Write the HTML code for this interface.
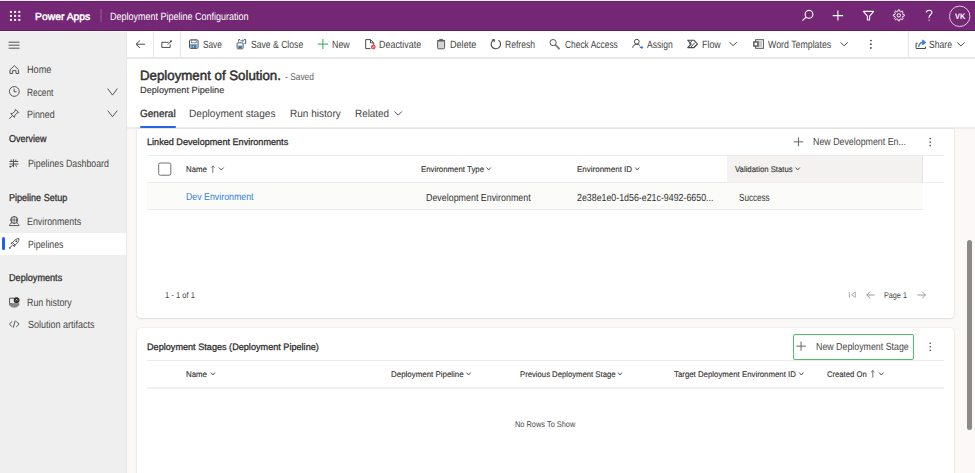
<!DOCTYPE html>
<html><head><meta charset="utf-8"><style>
html,body{margin:0;padding:0;width:975px;height:473px;overflow:hidden;position:relative;font-family:"Liberation Sans",sans-serif;}
.t{position:absolute;white-space:nowrap;transform-origin:0 0;text-rendering:geometricPrecision}
svg{overflow:visible}
</style></head><body>
<div style="position:absolute;left:0px;top:0px;width:975px;height:473px;background:#faf9f8"></div>
<div style="position:absolute;left:0px;top:0px;width:975px;height:1px;background:#f3f4f1"></div>
<div style="position:absolute;left:0px;top:1px;width:975px;height:30px;background:#742774"></div>
<div style="position:absolute;left:0px;top:30px;width:975px;height:1px;background:#651a65"></div>
<div style="position:absolute;left:0px;top:1px;width:975px;height:1px;background:#6c1f6c"></div>
<div style="position:absolute;left:0px;top:31px;width:127px;height:442px;background:#efefef"></div>
<div style="position:absolute;left:0px;top:31px;width:126px;height:1px;background:#fafafa"></div>
<div style="position:absolute;left:126px;top:31px;width:1px;height:442px;background:#e6e6e6"></div>
<div style="position:absolute;left:127px;top:31px;width:848px;height:27px;background:#ffffff"></div>
<div style="position:absolute;left:127px;top:57px;width:848px;height:2px;background:#e9e8e7"></div>
<div style="position:absolute;left:127px;top:59px;width:848px;height:68px;background:#ffffff"></div>
<div style="position:absolute;left:127px;top:127px;width:848px;height:2px;background:#eeedec"></div>
<div style="position:absolute;left:0px;top:233px;width:126px;height:22px;background:#ffffff"></div>
<div style="position:absolute;left:2px;top:237px;width:3px;height:13px;background:#1f5ff0;border-radius:2px"></div>
<div style="position:absolute;left:137px;top:129px;width:817px;height:189px;background:#fff;border-radius:0 0 4px 4px;box-shadow:0 0 2px rgba(0,0,0,0.14),0 1px 2px rgba(0,0,0,0.08)"></div>
<div style="position:absolute;left:137px;top:328px;width:817px;height:160px;background:#fff;border-radius:4px;box-shadow:0 0 2px rgba(0,0,0,0.14),0 1px 2px rgba(0,0,0,0.08)"></div>
<div style="position:absolute;left:967px;top:240px;width:5px;height:190px;background:#8a8a8a;border-radius:3px"></div>
<div style="position:absolute;left:140px;top:126px;width:36px;height:2px;background:#2266e3;border-radius:1px"></div>
<div style="position:absolute;left:147px;top:155px;width:797px;height:1px;background:#edebe9"></div>
<div style="position:absolute;left:727px;top:156px;width:196px;height:27px;background:#f3f2f1"></div>
<div style="position:absolute;left:922px;top:156px;width:1px;height:26px;background:#e6e4e2"></div>
<div style="position:absolute;left:147px;top:182px;width:797px;height:1px;background:#edebe9"></div>
<div style="position:absolute;left:147px;top:183px;width:776px;height:26px;background:#fbfbfa"></div>
<div style="position:absolute;left:147px;top:209px;width:776px;height:1px;background:#edebe9"></div>
<div style="position:absolute;left:147px;top:360px;width:797px;height:1px;background:#edebe9"></div>
<div style="position:absolute;left:147px;top:387px;width:797px;height:2px;background:#f0efee"></div>
<div style="position:absolute;left:793px;top:334px;width:121px;height:26px;border:1.6px solid #4fbd6a;border-radius:2px;box-sizing:border-box"></div>
<div class="t" id="t0" style="left:35.20px;top:13.00px;font-size:10.3px;line-height:10.3px;transform:scaleX(1.0064);color:#ffffff;-webkit-text-stroke-width:0.45px;">Power Apps</div>
<div class="t" id="t1" style="left:110.47px;top:12.00px;font-size:10.5px;line-height:10.5px;transform:scaleX(0.8566);color:#ffffff;">Deployment Pipeline Configuration</div>
<div class="t" id="t2" style="left:202.59px;top:40.00px;font-size:10.5px;line-height:10.5px;transform:scaleX(0.7879);color:#474645;">Save</div>
<div class="t" id="t3" style="left:250.72px;top:40.00px;font-size:10.5px;line-height:10.5px;transform:scaleX(0.8201);color:#474645;">Save &amp; Close</div>
<div class="t" id="t4" style="left:332.11px;top:40.00px;font-size:10.5px;line-height:10.5px;transform:scaleX(0.8444);color:#474645;">New</div>
<div class="t" id="t5" style="left:378.87px;top:40.00px;font-size:10.5px;line-height:10.5px;transform:scaleX(0.8507);color:#474645;">Deactivate</div>
<div class="t" id="t6" style="left:450.37px;top:40.00px;font-size:10.5px;line-height:10.5px;transform:scaleX(0.8651);color:#474645;">Delete</div>
<div class="t" id="t7" style="left:505.20px;top:40.00px;font-size:10.5px;line-height:10.5px;transform:scaleX(0.8169);color:#474645;">Refresh</div>
<div class="t" id="t8" style="left:564.63px;top:40.00px;font-size:10.5px;line-height:10.5px;transform:scaleX(0.8006);color:#474645;">Check Access</div>
<div class="t" id="t9" style="left:646.67px;top:40.00px;font-size:10.5px;line-height:10.5px;transform:scaleX(0.8159);color:#474645;">Assign</div>
<div class="t" id="t10" style="left:702.19px;top:40.00px;font-size:10.5px;line-height:10.5px;transform:scaleX(0.8432);color:#474645;">Flow</div>
<div class="t" id="t11" style="left:768.33px;top:40.00px;font-size:10.5px;line-height:10.5px;transform:scaleX(0.8373);color:#474645;">Word Templates</div>
<div class="t" id="t12" style="left:929.13px;top:40.00px;font-size:10.5px;line-height:10.5px;transform:scaleX(0.8194);color:#474645;">Share</div>
<div class="t" id="t13" style="left:27.46px;top:65.00px;font-size:10.5px;line-height:10.5px;transform:scaleX(0.8700);color:#474645;">Home</div>
<div class="t" id="t14" style="left:27.42px;top:88.00px;font-size:10.5px;line-height:10.5px;transform:scaleX(0.7925);color:#474645;">Recent</div>
<div class="t" id="t15" style="left:27.38px;top:110.00px;font-size:10.5px;line-height:10.5px;transform:scaleX(0.8466);color:#474645;">Pinned</div>
<div class="t" id="t16" style="left:27.86px;top:159.00px;font-size:10.5px;line-height:10.5px;transform:scaleX(0.8347);color:#474645;">Pipelines Dashboard</div>
<div class="t" id="t17" style="left:27.46px;top:217.00px;font-size:10.5px;line-height:10.5px;transform:scaleX(0.8426);color:#474645;">Environments</div>
<div class="t" id="t18" style="left:27.86px;top:240.00px;font-size:10.5px;line-height:10.5px;transform:scaleX(0.8309);color:#474645;">Pipelines</div>
<div class="t" id="t19" style="left:27.47px;top:298.00px;font-size:10.5px;line-height:10.5px;transform:scaleX(0.8422);color:#474645;">Run history</div>
<div class="t" id="t20" style="left:27.56px;top:320.00px;font-size:10.5px;line-height:10.5px;transform:scaleX(0.8555);color:#474645;">Solution artifacts</div>
<div class="t" id="t21" style="left:9.25px;top:135.00px;font-size:10.0px;line-height:10.0px;transform:scaleX(0.8966);color:#323130;-webkit-text-stroke-width:0.30px;">Overview</div>
<div class="t" id="t22" style="left:8.59px;top:194.00px;font-size:10.0px;line-height:10.0px;transform:scaleX(0.9027);color:#323130;-webkit-text-stroke-width:0.30px;">Pipeline Setup</div>
<div class="t" id="t23" style="left:8.59px;top:274.00px;font-size:10.0px;line-height:10.0px;transform:scaleX(0.9116);color:#323130;-webkit-text-stroke-width:0.30px;">Deployments</div>
<div class="t" id="t24" style="left:140.01px;top:69.00px;font-size:13.5px;line-height:13.5px;transform:scaleX(0.9832);color:#323130;-webkit-text-stroke-width:0.50px;">Deployment of Solution.</div>
<div class="t" id="t25" style="left:284.66px;top:73.00px;font-size:9.9px;line-height:9.9px;transform:scaleX(0.8499);color:#605e5c;">- Saved</div>
<div class="t" id="t26" style="left:139.52px;top:86.00px;font-size:9.0px;line-height:9.0px;transform:scaleX(1.0206);color:#323130;-webkit-text-stroke-width:0.12px;">Deployment Pipeline</div>
<div class="t" id="t27" style="left:140.45px;top:109.00px;font-size:10.5px;line-height:10.5px;transform:scaleX(0.9532);color:#323130;-webkit-text-stroke-width:0.30px;">General</div>
<div class="t" id="t28" style="left:188.61px;top:109.00px;font-size:10.5px;line-height:10.5px;transform:scaleX(0.9616);color:#474645;">Deployment stages</div>
<div class="t" id="t29" style="left:289.64px;top:109.00px;font-size:10.5px;line-height:10.5px;transform:scaleX(0.9557);color:#474645;">Run history</div>
<div class="t" id="t30" style="left:355.07px;top:109.00px;font-size:10.5px;line-height:10.5px;transform:scaleX(0.9425);color:#474645;">Related</div>
<div class="t" id="t31" style="left:146.91px;top:138.00px;font-size:9.3px;line-height:9.3px;transform:scaleX(0.9792);color:#323130;-webkit-text-stroke-width:0.30px;">Linked Development Environments</div>
<div class="t" id="t32" style="left:812.58px;top:138.00px;font-size:10.3px;line-height:10.3px;transform:scaleX(0.8584);color:#484644;">New Development En...</div>
<div class="t" id="t33" style="left:186.48px;top:166.00px;font-size:8.2px;line-height:8.2px;transform:scaleX(0.9556);color:#323130;-webkit-text-stroke-width:0.12px;">Name</div>
<div class="t" id="t34" style="left:421.48px;top:166.00px;font-size:8.2px;line-height:8.2px;transform:scaleX(0.9575);color:#323130;-webkit-text-stroke-width:0.12px;">Environment Type</div>
<div class="t" id="t35" style="left:577.43px;top:166.00px;font-size:8.2px;line-height:8.2px;transform:scaleX(0.9760);color:#323130;-webkit-text-stroke-width:0.12px;">Environment ID</div>
<div class="t" id="t36" style="left:735.20px;top:166.00px;font-size:8.2px;line-height:8.2px;transform:scaleX(0.9480);color:#323130;-webkit-text-stroke-width:0.12px;">Validation Status</div>
<div class="t" id="t37" style="left:186.36px;top:193.00px;font-size:10px;line-height:10px;transform:scaleX(0.8805);color:#2f7fd8;">Dev Environment</div>
<div class="t" id="t38" style="left:426.36px;top:194.00px;font-size:10.3px;line-height:10.3px;transform:scaleX(0.8628);color:#323130;">Development Environment</div>
<div class="t" id="t39" style="left:577.29px;top:194.00px;font-size:10.3px;line-height:10.3px;transform:scaleX(0.8573);color:#323130;">2e38e1e0-1d56-e21c-9492-6650...</div>
<div class="t" id="t40" style="left:739.39px;top:194.00px;font-size:10.3px;line-height:10.3px;transform:scaleX(0.7883);color:#323130;">Success</div>
<div class="t" id="t41" style="left:165.37px;top:291.00px;font-size:8.5px;line-height:8.5px;transform:scaleX(0.8916);color:#484644;">1 - 1 of 1</div>
<div class="t" id="t42" style="left:884.36px;top:291.00px;font-size:8.5px;line-height:8.5px;transform:scaleX(0.8510);color:#484644;">Page 1</div>
<div class="t" id="t43" style="left:146.91px;top:343.00px;font-size:9.3px;line-height:9.3px;transform:scaleX(0.9808);color:#323130;-webkit-text-stroke-width:0.30px;">Deployment Stages (Deployment Pipeline)</div>
<div class="t" id="t44" style="left:815.58px;top:343.00px;font-size:10.3px;line-height:10.3px;transform:scaleX(0.8574);color:#484644;">New Deployment Stage</div>
<div class="t" id="t45" style="left:186.46px;top:371.00px;font-size:8.2px;line-height:8.2px;transform:scaleX(0.9615);color:#323130;-webkit-text-stroke-width:0.12px;">Name</div>
<div class="t" id="t46" style="left:391.34px;top:371.00px;font-size:8.2px;line-height:8.2px;transform:scaleX(0.9674);color:#323130;-webkit-text-stroke-width:0.12px;">Deployment Pipeline</div>
<div class="t" id="t47" style="left:519.71px;top:371.00px;font-size:8.2px;line-height:8.2px;transform:scaleX(0.9411);color:#323130;-webkit-text-stroke-width:0.12px;">Previous Deployment Stage</div>
<div class="t" id="t48" style="left:673.81px;top:371.00px;font-size:8.2px;line-height:8.2px;transform:scaleX(0.9567);color:#323130;-webkit-text-stroke-width:0.12px;">Target Deployment Environment ID</div>
<div class="t" id="t49" style="left:827.28px;top:371.00px;font-size:8.2px;line-height:8.2px;transform:scaleX(0.9367);color:#323130;-webkit-text-stroke-width:0.12px;">Created On</div>
<div class="t" id="t50" style="left:515.27px;top:420.00px;font-size:8.3px;line-height:8.3px;transform:scaleX(0.8919);color:#4a4a4a;">No Rows To Show</div>
<svg style="position:absolute;left:0;top:0" width="975" height="473" viewBox="0 0 975 473"><rect x="9.90" y="10.90" width="2" height="2" fill="#fff"/><rect x="9.90" y="14.90" width="2" height="2" fill="#fff"/><rect x="9.90" y="18.90" width="2" height="2" fill="#fff"/><rect x="14.10" y="10.90" width="2" height="2" fill="#fff"/><rect x="14.10" y="14.90" width="2" height="2" fill="#fff"/><rect x="14.10" y="18.90" width="2" height="2" fill="#fff"/><rect x="18.30" y="10.90" width="2" height="2" fill="#fff"/><rect x="18.30" y="14.90" width="2" height="2" fill="#fff"/><rect x="18.30" y="18.90" width="2" height="2" fill="#fff"/><rect x="100.5" y="9" width="1" height="13" fill="rgba(255,255,255,0.25)"/><circle cx="809" cy="14.3" r="3.9" stroke="#fff" stroke-width="1.1" fill="none"/><path d="M806.2 17.1 L802.4 20.6" stroke="#ffffff" stroke-width="1.2" fill="none" /><path d="M832.7 15.6 H843.1 M837.9 10.5 V20.6" stroke="#ffffff" stroke-width="1.1" fill="none" /><path d="M863.3 11.4 H873.7 L869.6 16.2 V20 H867.4 V16.2 Z" stroke="#ffffff" stroke-width="1.1" fill="none" stroke-linejoin="round"/><path d="M904.35 15.35 L904.30 16.07 L902.71 16.39 L902.55 16.88 L902.31 17.35 L903.21 18.70 L902.74 19.24 L902.20 19.71 L900.85 18.81 L900.38 19.05 L899.89 19.21 L899.57 20.80 L898.85 20.85 L898.13 20.80 L897.81 19.21 L897.32 19.05 L896.85 18.81 L895.50 19.71 L894.96 19.24 L894.49 18.70 L895.39 17.35 L895.15 16.88 L894.99 16.39 L893.40 16.07 L893.35 15.35 L893.40 14.63 L894.99 14.31 L895.15 13.82 L895.39 13.35 L894.49 12.00 L894.96 11.46 L895.50 10.99 L896.85 11.89 L897.32 11.65 L897.81 11.49 L898.13 9.90 L898.85 9.85 L899.57 9.90 L899.89 11.49 L900.38 11.65 L900.85 11.89 L902.20 10.99 L902.74 11.46 L903.21 12.00 L902.31 13.35 L902.55 13.82 L902.71 14.31 L904.30 14.63 Z" stroke="#ffffff" stroke-width="1.0" fill="none" stroke-linejoin="round"/><circle cx="898.85" cy="15.35" r="1.7" stroke="#fff" stroke-width="1" fill="none"/><path d="M926.3 12.6 C926.3 10.9 927.6 10.2 929.1 10.2 C930.7 10.2 931.9 11.1 931.9 12.6 C931.9 14.6 929.1 14.9 929.1 17.2 V18" stroke="#ffffff" stroke-width="1.1" fill="none" /><circle cx="929.1" cy="20.1" r="0.7" fill="#fff"/><circle cx="959.7" cy="16.3" r="10.2" stroke="rgba(255,255,255,0.75)" stroke-width="1" fill="none"/><path d="M145 44.2 H136 M140 40.4 L136 44.2 L140 48" stroke="#4a4a4a" stroke-width="1" fill="none" /><rect x="153" y="31" width="1" height="26" fill="#e8e6e4"/><rect x="180" y="31" width="1" height="26" fill="#e8e6e4"/><rect x="908" y="31" width="1" height="26" fill="#e8e6e4"/><path d="M168.5 42.3 H161.8 V47.4 H170.2 V44.5" stroke="#4a4a4a" stroke-width="1" fill="none" /><path d="M167.8 44.6 L171.2 41.2" stroke="#4a4a4a" stroke-width="1" fill="none" /><circle cx="171" cy="41.2" r="0.9" fill="#333"/><rect x="189.5" y="39.8" width="8.6" height="8.6" rx="1.2" fill="#fff" stroke="#555" stroke-width="1"/><rect x="190" y="43.9" width="7.6" height="4" fill="#72aee9"/><rect x="191.3" y="40.2" width="5" height="2.6" fill="#fff" stroke="#666" stroke-width="0.7"/><rect x="191.8" y="45.3" width="4" height="3.1" fill="#5d6670"/><rect x="192.8" y="45.9" width="1.1" height="1.8" fill="#cfd6dd"/><rect x="237.1" y="42.8" width="6" height="6" rx="0.9" fill="#fff" stroke="#555" stroke-width="1"/><rect x="237.6" y="45.4" width="5" height="3" fill="#72aee9"/><rect x="238.5" y="46.3" width="3.2" height="2.2" fill="#5d6670"/><path d="M238.6 41.6 V39.6 H240" stroke="#4a4a4a" stroke-width="0.9" fill="none" /><path d="M243.8 39.6 H245.7 V43.4 H244.3" stroke="#4a4a4a" stroke-width="0.9" fill="none" /><path d="M240.4 40.7 H243.6 M242.5 39.6 L243.6 40.7 L242.5 41.8" stroke="#3b7fd4" stroke-width="1.0" fill="none" /><path d="M317.7 44.1 H328 M322.85 39.1 V49.1" stroke="#51b96e" stroke-width="1.2" fill="none" /><path d="M370.5 39.6 H365.7 V48.6 H370.5 M370.5 39.6 L373.7 42.8 V44.8 M370.5 39.6 V42.8 H373.7" stroke="#4a4a4a" stroke-width="1" fill="none" stroke-linejoin="round"/><circle cx="373.3" cy="47" r="2.4" fill="#e5505a"/><path d="M372.3 48 L374.3 46" stroke="#fff" stroke-width="0.7" fill="none" /><rect x="437.6" y="41" width="7" height="7.8" rx="1" fill="#d4d4d4" stroke="#5a5a5a" stroke-width="1"/><path d="M437 40.6 H445.2 M439.6 40.4 V39.4 H442.6 V40.4" stroke="#5a5a5a" stroke-width="1" fill="none" /><path d="M494.2 39.7 A4.7 4.7 0 1 0 498.5 40.2" stroke="#4a4a4a" stroke-width="1.1" fill="none" /><path d="M491.7 40.0 L494.5 39.6 L494.1 42.2" stroke="#4a4a4a" stroke-width="1.0" fill="none" /><circle cx="553.1" cy="42.6" r="3.1" stroke="#555" stroke-width="1" fill="none"/><path d="M555.3 44.8 L559.6 49.1" stroke="#4a4a4a" stroke-width="1.6" fill="none" /><path d="M555.3 44.8 L559.6 49.1" stroke="#fff" stroke-width="0.5" fill="none" /><circle cx="636.8" cy="41.7" r="2.4" stroke="#4a4a4a" stroke-width="1" fill="none"/><path d="M632.7 47.8 C632.9 45.4 634.6 44.3 636.8 44.3 C638.3 44.3 639.3 44.8 640 45.6" stroke="#4a4a4a" stroke-width="1" fill="none" /><path d="M639.8 47.4 H642.4 M641.4 46.3 L642.5 47.4 L641.4 48.5" stroke="#2f7bd9" stroke-width="1.2" fill="none" /><path d="M687.7 40.2 H694 L697.5 44 L694 47.6 H687.7 L691.2 44 Z" stroke="#4a4a4a" stroke-width="1.1" fill="none" stroke-linejoin="round"/><path d="M690.7 47.3 L695.2 42.3 M693.8 47.3 L696.3 44.5 M689.0 44.2 L692.1 40.6" stroke="#4a4a4a" stroke-width="1" fill="none" /><path d="M729.4 42.2 L733.10 45.6 L736.8 42.2" stroke="#4a4a4a" stroke-width="1" fill="none" /><path d="M840.4 42.3 L844.15 45.8 L847.9 42.3" stroke="#4a4a4a" stroke-width="1" fill="none" /><path d="M957.2 42.4 L960.95 46 L964.7 42.4" stroke="#4a4a4a" stroke-width="1" fill="none" /><rect x="755.6" y="39.7" width="7.8" height="8.6" fill="#fff" stroke="#555" stroke-width="1"/><path d="M757.5 42 H762 M757.5 44 H762 M757.5 46 H762" stroke="#777" stroke-width="0.8" fill="none" /><rect x="753.2" y="41.3" width="5.4" height="5.4" fill="#4a4a4a"/><rect x="754.5" y="42.6" width="2.8" height="2.8" fill="#fff"/><circle cx="870.9" cy="40.5" r="0.85" fill="#333"/><circle cx="870.9" cy="44.2" r="0.85" fill="#333"/><circle cx="870.9" cy="47.9" r="0.85" fill="#333"/><path d="M917.6 43.2 H916.1 V48.5 H925.5 V46.6" stroke="#4a4a4a" stroke-width="1" fill="none" /><path d="M918.6 47 C919.2 43.5 921 42.3 923.8 42.3" stroke="#3a7fd5" stroke-width="1.4" fill="none" /><path d="M922.6 39.9 L925.9 42.4 L922.6 44.9 Z" stroke="#3a7fd5" stroke-width="0.8" fill="#3a7fd5" /><path d="M8.6 42.2 H19.5 M8.6 45.2 H19.5 M8.6 48.2 H19.5" stroke="#555" stroke-width="1" fill="none" /><path d="M10 69.8 L14.3 65.6 L18.6 69.8 V73.5 H16 V70.6 H12.6 V73.5 H10 Z" stroke="#555" stroke-width="1" fill="none" stroke-linejoin="round"/><circle cx="14.3" cy="91.45" r="4.9" stroke="#555" stroke-width="1" fill="none"/><path d="M14.1 88.6 V91.8 H16.6" stroke="#555" stroke-width="1" fill="none" /><path d="M15.5 109.3 L18.7 112.5 L16.7 113.2 L14.5 115.8 L14.6 117.4 L10.7 113.5 L12.3 113.6 L14.9 111.3 Z M12.6 115.6 L9.3 118.8" stroke="#555" stroke-width="1" fill="none" stroke-linejoin="round"/><path d="M107.7 88.6 L112.50 95.1 L117.3 88.6" stroke="#555" stroke-width="1" fill="none" /><path d="M107.7 110.6 L112.50 116.7 L117.3 110.6" stroke="#555" stroke-width="1" fill="none" /><path d="M13.5 159.2 V167 M9.5 161.5 H18.3 M9.5 164 H18.3 M11.2 159.6 V162 M15.8 159.6 V162 M11.4 166.6 L13.2 165 M15.2 165 L17 166.6" stroke="#555" stroke-width="1" fill="none" /><circle cx="10.3" cy="166.6" r="0.9" fill="#333"/><circle cx="14.2" cy="220" r="3.5" stroke="#555" stroke-width="1" fill="none"/><path d="M10.8 220 H17.6 M14.2 216.5 V223.5 M12.2 217.4 C11.5 219 11.5 221 12.2 222.6 M16.2 217.4 C16.9 219 16.9 221 16.2 222.6" stroke="#555" stroke-width="0.8" fill="none" /><path d="M9.4 225.6 C9.8 223.8 10.8 223 12 222.7 M19 225.6 C18.6 223.8 17.6 223 16.4 222.7 M9.4 225.6 H19" stroke="#555" stroke-width="1" fill="none" /><path d="M18.9 238.6 C16.3 238.6 14.1 240.1 12.6 242.6 L15 245 C17.5 243.5 19 241.3 18.9 238.6 Z" stroke="#555" stroke-width="1" fill="none" stroke-linejoin="round"/><path d="M12.6 242.6 L10.9 243.2 L12.6 244.4 M15 245 L14.4 246.7 L13.2 245 M12.4 245.2 L10 247.6" stroke="#555" stroke-width="1" fill="none" /><circle cx="9.8" cy="247.9" r="0.9" fill="#555"/><circle cx="16.3" cy="241.2" r="0.9" fill="#555"/><path d="M16.6 298.2 H9.6 V303.5 H12" stroke="#555" stroke-width="1" fill="none" /><path d="M9.4 303.8 C9.8 306.2 11.5 307.1 14.2 307.1 C17 307.1 18.6 306.2 19 303.8 Z" stroke="#777" stroke-width="1" fill="#8a8a8a" /><circle cx="16.6" cy="300.2" r="2.9" fill="#333"/><path d="M15.7 300.4 L16.6 299.4 L17.7 300.6" stroke="#fff" stroke-width="0.7" fill="none" /><path d="M12.2 321.4 L9.4 324.1 L12.2 326.8 M16.3 321.4 L19.1 324.1 L16.3 326.8 M15.2 320.6 L13.3 327.6" stroke="#555" stroke-width="1" fill="none" /><path d="M394.6 111.5 L398.20 115.2 L401.8 111.5" stroke="#555" stroke-width="1" fill="none" /><path d="M793.7 141.8 H803.2 M798.45 137.4 V146.2" stroke="#666" stroke-width="1" fill="none" /><circle cx="930.2" cy="138.6" r="0.8" fill="#444"/><circle cx="930.2" cy="142.1" r="0.8" fill="#444"/><circle cx="930.2" cy="145.6" r="0.8" fill="#444"/><rect x="158.7" y="163" width="12.1" height="12.2" rx="1.6" fill="#fff" stroke="#6f6f6f" stroke-width="1"/><path d="M212.8 165.9 V172.8 M211.1 167.6 L212.8 165.9 L214.5 167.6" stroke="#666" stroke-width="0.9" fill="none" /><path d="M218.9 167.5 L221.30 170 L223.7 167.5" stroke="#444" stroke-width="0.9" fill="none" /><path d="M486.6 167.5 L488.70 170 L490.8 167.5" stroke="#444" stroke-width="0.9" fill="none" /><path d="M635.2 167.5 L637.25 170 L639.3 167.5" stroke="#444" stroke-width="0.9" fill="none" /><path d="M795.6 167.5 L797.70 170 L799.8 167.5" stroke="#444" stroke-width="0.9" fill="none" /><path d="M849.3 291.8 V297.6" stroke="#a8a8a8" stroke-width="1" fill="none" /><path d="M855.3 292 L851.5 294.7 L855.3 297.4 Z" stroke="#a8a8a8" stroke-width="0.9" fill="none" /><path d="M874.6 295 H866.8 M870 291.7 L866.8 295 L870 298.3" stroke="#999" stroke-width="1" fill="none" /><path d="M917.5 295 H925.4 M922.2 291.7 L925.4 295 L922.2 298.3" stroke="#999" stroke-width="1" fill="none" /><path d="M796.3 346.1 H805.8 M801.05 341.5 V350.7" stroke="#666" stroke-width="1" fill="none" /><circle cx="930.2" cy="343.2" r="0.8" fill="#444"/><circle cx="930.2" cy="346.7" r="0.8" fill="#444"/><circle cx="930.2" cy="350.2" r="0.8" fill="#444"/><path d="M210.8 372.5 L212.90 375 L215 372.5" stroke="#444" stroke-width="0.9" fill="none" /><path d="M466.5 372.5 L468.60 375 L470.7 372.5" stroke="#444" stroke-width="0.9" fill="none" /><path d="M618 372.5 L620.05 375 L622.1 372.5" stroke="#444" stroke-width="0.9" fill="none" /><path d="M799.2 372.5 L801.30 375 L803.4 372.5" stroke="#444" stroke-width="0.9" fill="none" /><path d="M879 372.5 L881.35 375 L883.7 372.5" stroke="#444" stroke-width="0.9" fill="none" /><path d="M872.8 370.5 V377.6 M871.1 372.2 L872.8 370.5 L874.5 372.2" stroke="#666" stroke-width="0.9" fill="none" /></svg>
<div class="t" id="t51" style="left:954.80px;top:13.00px;font-size:8px;line-height:8px;transform:scaleX(0.9178);color:#ffffff;font-weight:700;">VK</div>
</body></html>
